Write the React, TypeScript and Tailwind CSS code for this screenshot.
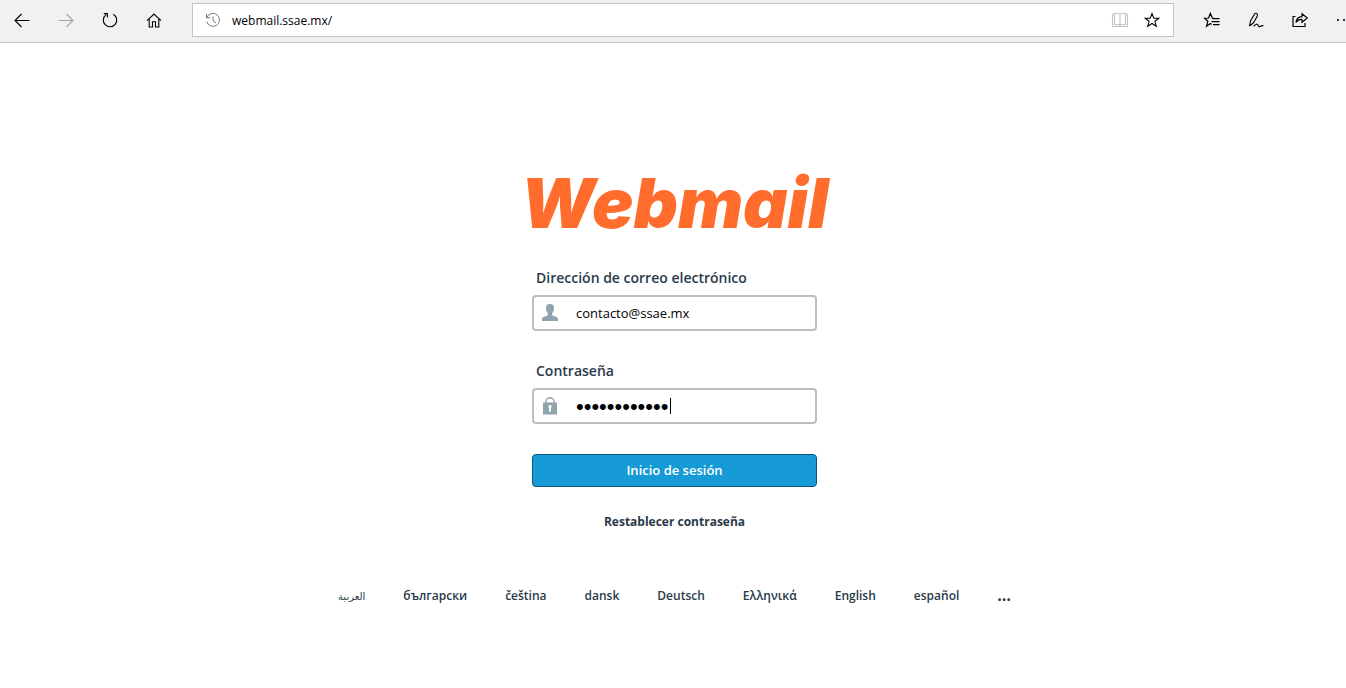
import React from "react";

const languages = [
  { label: "български", code: "bg" },
  { label: "čeština", code: "cs" },
  { label: "dansk", code: "da" },
  { label: "Deutsch", code: "de" },
  { label: "Ελληνικά", code: "el" },
  { label: "English", code: "en" },
  { label: "español", code: "es" },
];

type IconButtonProps = {
  label: string;
  className?: string;
  children: React.ReactNode;
};

function IconButton({ label, className = "text-black", children }: IconButtonProps) {
  return (
    <button type="button" aria-label={label} className={`flex size-5 shrink-0 items-center justify-center ${className}`}>
      <svg viewBox="0 0 16 16" className="size-4 overflow-visible" fill="none" stroke="currentColor" strokeWidth="1.1">
        {children}
      </svg>
    </button>
  );
}

function BrowserBar() {
  return (
    <header className="flex h-[43px] items-center overflow-hidden border-b border-[#c9c9c9] bg-[#f1f1f1] pb-0.5 pl-3">
      <nav className="flex gap-6" aria-label="Navegación">
        <IconButton label="Atrás">
          <path d="M15.5 8.5H1M7.5 2 1 8.5 7.5 15" />
        </IconButton>
        <IconButton label="Adelante" className="text-[#a3a3a3]">
          <path d="M.5 8.5H15M8.5 2 15 8.5 8.5 15" />
        </IconButton>
        <IconButton label="Actualizar">
          <path d="M4.2 2.6A6.7 6.7 0 1 0 11.2 2.2M1.8 1.6h3.6v3.8" />
        </IconButton>
        <IconButton label="Inicio">
          <path d="M1 8.7 8 2l7 6.7M3.2 7v8h3.3V9.7h3V15h3.3V7" />
        </IconButton>
      </nav>
      <div className="ml-7 flex h-[34px] min-w-0 flex-1 items-center border border-[#c4c4c4] bg-white pr-[11px] pl-2.5">
        <svg viewBox="0 0 16 16" className="mx-0.5 size-4 shrink-0 text-[#777]" fill="none" stroke="currentColor">
          <path d="M2 5.3A6.5 6.5 0 1 1 1.7 9.5M1.5 1.8v4h4M8 4.5v4l3 2.5" />
        </svg>
        <input
          type="text"
          aria-label="Dirección web"
          defaultValue="webmail.ssae.mx/"
          className="ml-[9px] min-w-0 flex-1 bg-transparent pt-0.5 font-['Open_Sans',sans-serif] text-[12px] text-black outline-none"
        />
        <div className="flex gap-3">
          <IconButton label="Vista de lectura" className="text-[#c4c4c4]">
            <path d="M.5 2.5h2v-1h4q1.5 0 1.5 1 0-1 1.5-1h4v1h2v12h-15zM2.500 2v10.500h4q1.500 0 1.500 1 0-1 1.500-1h4V2M8 2.500v12" />
          </IconButton>
          <IconButton label="Agregar a favoritos">
            <path d="m8 1.500 1.800 4.600 5 .2-3.900 3 1.400 4.900L8 11.500l-4.300 2.700 1.400-4.900-3.900-3 5-.2z" />
          </IconButton>
        </div>
      </div>
      <div className="ml-7 flex gap-6">
        <IconButton label="Favoritos">
          <path d="M9.500 6.500 8.200 5.800 6.300 1.500 4.600 6 .6 6.300l3.200 3-1.200 4.900 3.700-2.700 1.200 1M8.500 6.500h7M7.500 9.500h8M9 12.500h6.500" strokeWidth="1.250" />
        </IconButton>
        <IconButton label="Agregar notas">
          <path d="M1.500 14 2.500 9 6.500 2Q7.500.8 8.700 1.500T9.300 4L5.500 10.800 1.500 14" />
          <path d="M5.500 14.500Q8 11.800 9 12.200T10.500 14t2 .3 3-.3" />
        </IconButton>
        <IconButton label="Compartir">
          <path d="M3.500 4.500H1v10h12V11M4 10.500Q4.500 5 10 4.700V1.700L15.300 6 10 10.300V7.500Q6 7.200 4 10.500z" strokeWidth="1.200" />
        </IconButton>
        <button type="button" aria-label="Más opciones" className="flex h-5 w-3 shrink-0 items-center">
          <svg viewBox="0 0 16 4" className="h-1 w-4 shrink-0" fill="currentColor">
            <path d="M3 1h2v2H3zM9 1h2v2H9z" />
          </svg>
        </button>
      </div>
    </header>
  );
}

export default function App() {
  return (
    <div className="min-h-screen bg-white font-['Open_Sans','Noto_Sans',sans-serif] text-[#293a4a]">
      <BrowserBar />
      <main className="flex flex-col items-center pt-[125px] pl-[3px]">
        <h1 className="font-[Inter,sans-serif] text-[69px] leading-[70px] font-black text-[#ff6c2c] italic">
          Webmail
        </h1>
        <form className="mt-8 flex w-[285px] flex-col" onSubmit={(e) => e.preventDefault()}>
          <label htmlFor="user" className="px-1 text-[14px] leading-4 font-semibold">
            Dirección de correo electrónico
          </label>
          <div className="mt-[9px] flex h-9 items-center rounded border-2 border-[#bebebe] bg-white pl-2">
            <svg viewBox="0 0 16 18" className="h-[18px] w-4 shrink-0" fill="#90a4ae">
              <path d="M8 0c2.800 0 4 1.600 4 4 0 .6.300 1-.1 1.900C11.500 7.500 11 8.300 10.200 9v2.200c1 1 5.800 1.200 5.800 4V17H0v-1.800c0-2.800 4.800-3 5.800-4V9C5 8.300 4.500 7.500 4.100 5.900 3.700 5 4 4.600 4 4 4 1.600 5.200 0 8 0z" />
            </svg>
            <input
              id="user"
              type="text"
              defaultValue="contacto@ssae.mx"
              className="ml-[18px] min-w-0 flex-1 bg-transparent pt-0.5 text-[13px] text-black outline-none"
            />
          </div>
          <label htmlFor="pass" className="mt-8 px-1 text-[14px] leading-4 font-semibold">
            Contraseña
          </label>
          <div className="relative mt-[9px] flex h-9 items-center rounded border-2 border-[#bebebe] bg-white pl-2">
            <svg viewBox="0 0 16 18" className="h-[18px] w-4 shrink-0">
              <path d="M3.800 7V5a4.200 4.200 0 0 1 8.400 0V7" fill="none" stroke="#90a4ae" strokeWidth="1.500" />
              <path
                fillRule="evenodd"
                fill="#90a4ae"
                d="M1 5.500h14V17.500H1zM8 8a1.600 1.600 0 0 0-1 2.900v3.600h2v-3.600A1.600 1.600 0 0 0 8 8z"
              />
            </svg>
            <input
              id="pass"
              type="password"
              defaultValue="contrasena12"
              className="ml-[18px] min-w-0 flex-1 bg-transparent pt-0.5 font-['Liberation_Sans',sans-serif] text-[22px] leading-6 text-black outline-none"
            />
            <span aria-hidden="true" className="absolute top-2 left-[136px] h-4 w-px bg-black" />
          </div>
          <button
            type="submit"
            className="mt-[30px] h-[33px] rounded border border-[#095779] bg-[#179bd7] text-[13px] font-semibold text-white"
          >
            Inicio de sesión
          </button>
          <a href="#reset" className="mt-[27px] self-center text-[12px] leading-4 font-bold">
            Restablecer contraseña
          </a>
        </form>
        <ul className="mt-[57px] flex flex-wrap items-center justify-center gap-x-[38px] text-[12px] leading-4 font-semibold">
          <li>
            <a href="#ar" lang="ar" className="font-['DejaVu_Sans',sans-serif] text-[10px] font-normal">
              العربية
            </a>
          </li>
          {languages.map((l) => (
            <li key={l.code}>
              <a href={`#${l.code}`} lang={l.code}>
                {l.label}
              </a>
            </li>
          ))}
          <li>
            <a href="#more" aria-label="Más idiomas" className="text-[16px] font-bold">
              …
            </a>
          </li>
        </ul>
      </main>
    </div>
  );
}
